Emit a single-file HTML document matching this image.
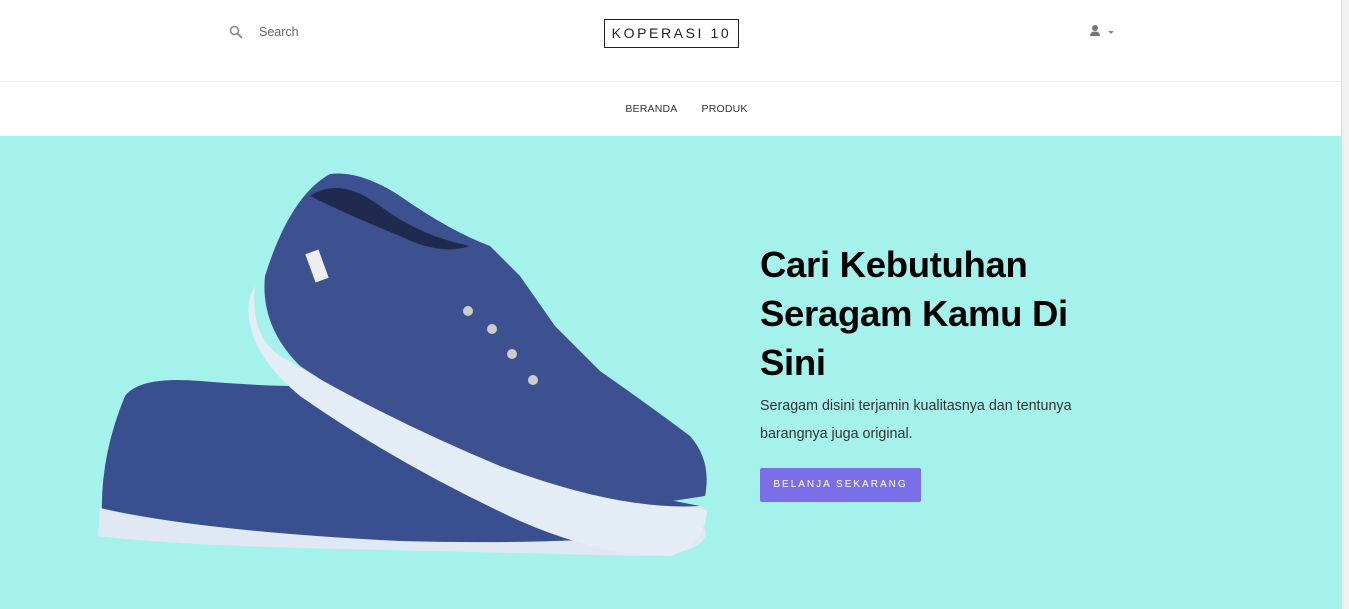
<!DOCTYPE html>
<html><head><meta charset="utf-8"><style>
*{margin:0;padding:0;box-sizing:border-box}
body{width:1349px;height:609px;overflow:hidden;font-family:"Liberation Sans",sans-serif;background:#fff;position:relative}
.top{height:82px;border-bottom:1px solid #eee;position:relative}
.search{position:absolute;left:229px;top:25px;font-size:12.5px;color:#666;display:flex;align-items:center}
.search span{margin-left:16px}
.logo{position:absolute;left:604px;top:19px;width:135px;height:29px;border:1px solid #222;font-size:14px;letter-spacing:2.6px;text-align:center;line-height:27px;color:#222}
.user{position:absolute;left:1089px;top:24px}
.nav{height:53px;text-align:center;font-size:10.5px;color:#333;line-height:54px;padding-left:24px}
.nav span{margin:0 12px;letter-spacing:.2px}
.hero{position:absolute;top:136px;left:0;width:1341px;height:473px;background:#a5f2ec}
.sb{position:absolute;right:0;top:0;width:8px;height:609px;background:#f1f1f1;border-left:1px solid #ddd}
h1{position:absolute;left:760px;top:104px;font-size:36.5px;line-height:49px;font-weight:bold;color:#000;width:340px;letter-spacing:-.3px}
p{position:absolute;left:760px;top:256px;font-size:14.3px;line-height:28px;color:#333;width:360px}
.btn{position:absolute;left:760px;top:332px;width:161px;height:34px;background:#7b6fe8;color:#fff;border-radius:2px;font-size:10px;letter-spacing:2px;text-align:center;line-height:34px}
</style></head><body>
<div class="top">
<div class="search"><svg width="14" height="14" viewBox="0 0 14 14"><circle cx="5.5" cy="5.5" r="4" fill="none" stroke="#888" stroke-width="1.6"/><path d="M8.5 8.5 L13 13" stroke="#888" stroke-width="1.8"/></svg><span>Search</span></div>
<div class="logo">KOPERASI 10</div>
<div class="user"><svg width="28" height="14" viewBox="0 0 28 14"><circle cx="6" cy="4" r="3" fill="#777"/><path d="M1 12 Q1 7.5 6 7.5 Q11 7.5 11 12Z" fill="#777"/><path d="M19 7 L25 7 L22 10Z" fill="#888"/></svg></div>
</div>
<div class="nav"><span>BERANDA</span><span>PRODUK</span></div>
<div class="hero">
<svg width="720" height="473" style="position:absolute;left:0;top:0">
<path d="M125 260 Q140 240 200 245 Q260 250 300 250 L350 262 L390 300 L540 340 Q650 360 700 370 L705 400 L600 415 L400 410 L210 400 L102 380 Q100 320 125 260Z" fill="#3a4f8f"/>
<path d="M100 372 Q200 395 400 405 Q600 410 705 392 L706 398 Q700 420 640 420 L300 412 Q160 408 98 400Z" fill="#dfe8f3"/>
<path d="M265 140 Q290 60 330 38 Q360 34 400 60 Q450 95 490 110 L520 140 L555 190 L600 235 Q650 270 690 300 Q712 325 705 360 L640 370 L540 345 L400 295 L300 230 Q260 190 265 140Z" fill="#3d5191"/>
<path d="M310 60 Q340 40 380 70 Q420 100 470 110 Q440 120 400 100 Q350 80 310 60Z" fill="#1f2a4e"/>
<path d="M255 150 Q250 200 280 220 Q380 280 500 330 Q620 375 700 370 L707 375 Q705 410 670 420 Q600 420 520 385 Q400 330 300 260 Q240 210 250 160Z" fill="#e4ecf6"/>
<circle cx="468" cy="175" r="5" fill="#ccc"/><circle cx="492" cy="193" r="5" fill="#ccc"/><circle cx="512" cy="218" r="5" fill="#ccc"/><circle cx="533" cy="244" r="5" fill="#ccc"/>
<rect x="310" y="115" width="14" height="30" fill="#eee" transform="rotate(-20 317 130)"/>
</svg>
<h1>Cari Kebutuhan Seragam Kamu Di Sini</h1>
<p>Seragam disini terjamin kualitasnya dan tentunya barangnya juga original.</p>
<div class="btn">BELANJA SEKARANG</div>
</div>
<div class="sb"></div>
</body></html>
